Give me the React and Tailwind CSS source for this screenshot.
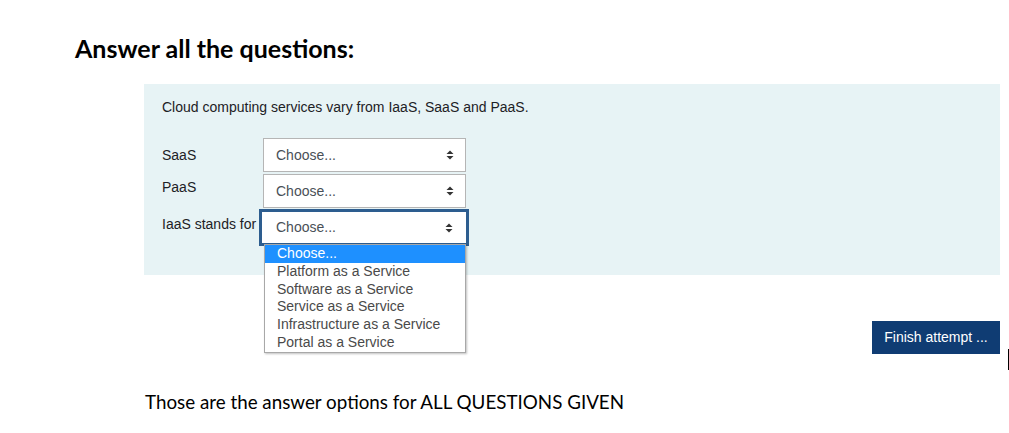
import React from "react";

const options = [
  "Choose...",
  "Platform as a Service",
  "Software as a Service",
  "Service as a Service",
  "Infrastructure as a Service",
  "Portal as a Service",
];

function Arrows() {
  return (
    <svg width="8" height="10" viewBox="0 0 8 10" className="shrink-0">
      <path d="M4 0.5 L7.5 4 H0.5 Z" fill="#333" />
      <path d="M4 9.5 L7.5 6 H0.5 Z" fill="#333" />
    </svg>
  );
}

function Select({ focused }) {
  if (focused) {
    return (
      <div className="ml-[-4px] flex h-[37px] w-[210px] items-center justify-between border-[3px] border-[#2d5d8f] bg-white pl-[14px] pr-[13px] text-[14px] text-[#495057]">
        <span>Choose...</span>
        <Arrows />
      </div>
    );
  }
  return (
    <div className="flex h-[34px] w-[203px] items-center justify-between border border-[#b5b5b5] bg-white pl-[12px] pr-[11px] text-[14px] text-[#495057]">
      <span>Choose...</span>
      <Arrows />
    </div>
  );
}

export default function App() {
  return (
    <div
      className="relative h-[433px] w-[1009px] overflow-hidden bg-white"
      style={{ fontFamily: "'Liberation Sans', Arial, sans-serif" }}
    >
      <h1
        className="pl-[75px] pt-[32px] text-[25px] font-bold leading-[32px] text-black"
        style={{ fontFamily: "Lato, 'Open Sans', sans-serif" }}
      >
        Answer all the questions:
      </h1>

      <div className="ml-[144px] mt-[20px] h-[191px] w-[856px] bg-[#e7f3f5] pl-[18px] pt-[14px] text-[14px] text-[#1d2125]">
        <p className="leading-[18px]">Cloud computing services vary from IaaS, SaaS and PaaS.</p>

        <div className="mt-[22px] flex flex-col gap-[2px]">
          <div className="flex items-start">
            <span className="w-[101px] pt-[7px]">SaaS</span>
            <Select />
          </div>
          <div className="flex items-start">
            <span className="w-[101px] pt-[3px]">PaaS</span>
            <Select />
          </div>
          <div className="relative -mt-[1px] flex items-start">
            <span className="w-[101px] pt-[5px]">IaaS stands for</span>
            <Select focused />
            <div className="absolute left-[102px] top-[35px] z-10 w-[202px] border border-[#a8a8a8] bg-white py-0 shadow-[1px_1px_2px_rgba(0,0,0,0.25)]">
              {options.map((o, i) => (
                <div
                  key={o}
                  className={
                    "h-[17.8px] pl-[12px] text-[14px] leading-[17.8px] " +
                    (i === 0 ? "bg-[#1e90ff] text-white" : "text-[#4a4a4a]")
                  }
                >
                  {o}
                </div>
              ))}
            </div>
          </div>
        </div>
      </div>

      <div className="mt-[46px] flex justify-end pr-[9px]">
        <button className="h-[33px] w-[128px] bg-[#0f3c73] text-[14px] text-white">
          Finish attempt ...
        </button>
      </div>

      <div className="absolute left-[1008px] top-[349px] h-[21px] w-[1px] bg-black" />

      <p
        className="pl-[145px] pt-[37px] text-[18.8px] leading-[22px] text-black"
        style={{ fontFamily: "Lato, 'Open Sans', sans-serif" }}
      >
        Those are the answer options for ALL QUESTIONS GIVEN
      </p>
    </div>
  );
}
